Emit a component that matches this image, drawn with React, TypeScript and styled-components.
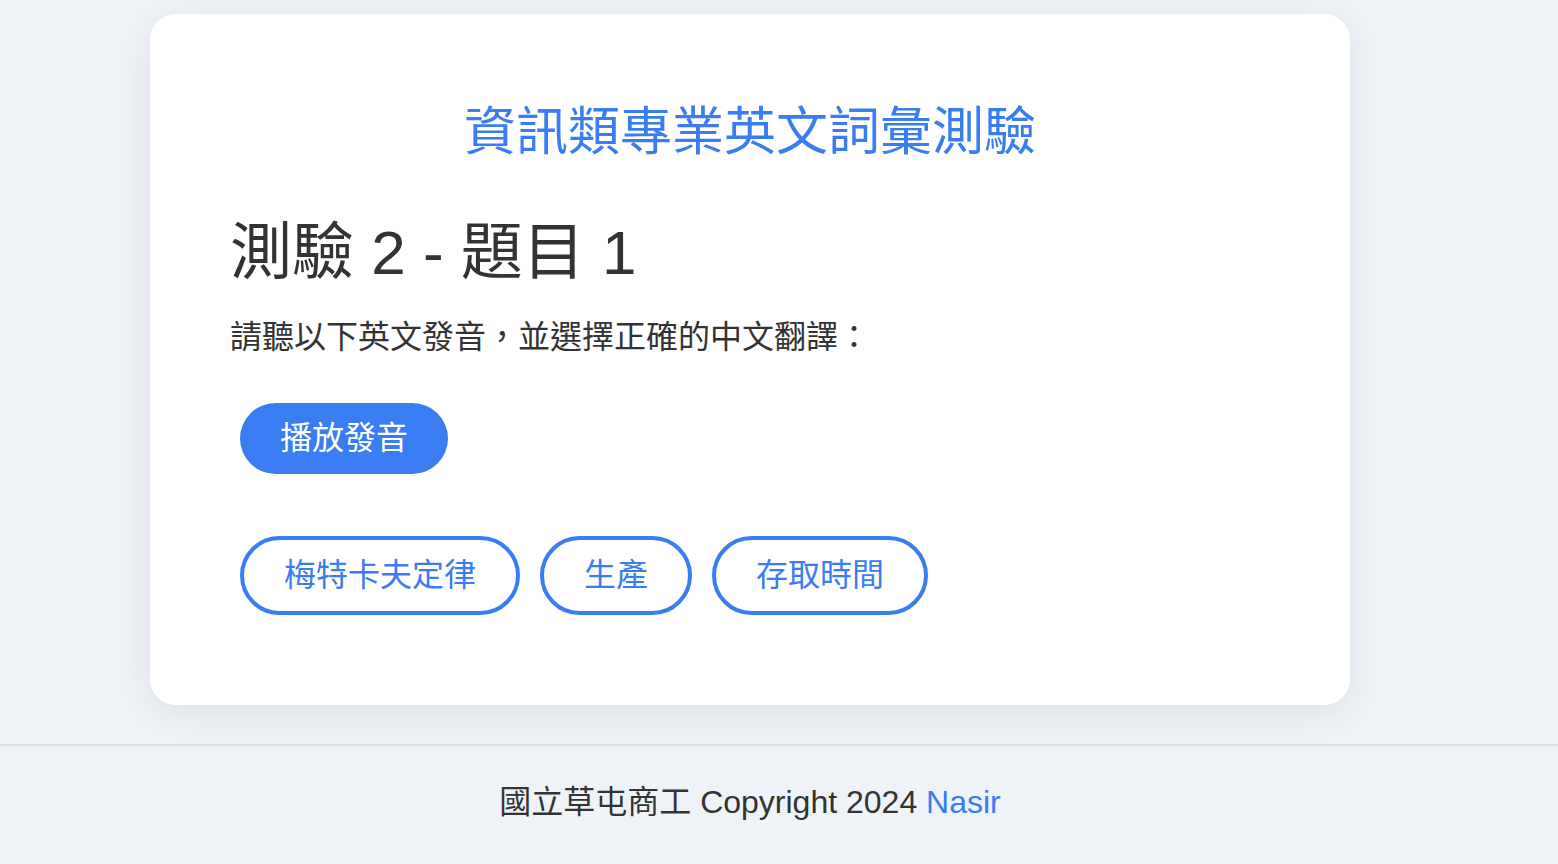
import React from "react";
import styled, { createGlobalStyle } from "styled-components";

const GlobalStyle = createGlobalStyle`
  html, body {
    margin: 0;
    padding: 0;
    background: #eff3f8;
    font-family: "Liberation Sans", "Noto Sans CJK TC", sans-serif;
    color: #333;
  }
`;

const BLUE = "#3a7cf2";

const Page = styled.div`
  width: 1500px;
  padding-top: 14px;
`;

const Card = styled.div`
  width: 1200px;
  margin: 0 auto;
  box-sizing: border-box;
  background: #fff;
  border-radius: 26px;
  box-shadow: 0 8px 36px rgba(30, 40, 60, 0.09);
  padding: 82px 80px 90px 80px;
`;

const Title = styled.h1`
  margin: 0;
  text-align: center;
  color: ${BLUE};
  font-size: 52px;
  font-weight: 400;
  line-height: 72px;
`;

const Question = styled.h2`
  margin: 49px 0 0 0;
  font-size: 62px;
  font-weight: 400;
  line-height: 72px;
`;

const Prompt = styled.p`
  margin: 24px 0 0 0;
  font-size: 32px;
  line-height: 48px;
`;

const Row = styled.div<{ $top: number }>`
  display: flex;
  gap: 20px;
  margin-top: ${(p) => p.$top}px;
  padding-left: 10px;
`;

const PillButton = styled.button<{ $filled?: boolean }>`
  font-family: inherit;
  font-size: 32px;
  line-height: 39px;
  padding: 16px 40px;
  border-radius: 999px;
  cursor: pointer;
  border: ${(p) => (p.$filled ? "none" : `4px solid ${BLUE}`)};
  background: ${(p) => (p.$filled ? BLUE : "#fff")};
  color: ${(p) => (p.$filled ? "#fff" : BLUE)};
`;

const Footer = styled.footer`
  margin-top: 39px;
  border-top: 2px solid #dcdde0;
  height: 116px;
`;

const FooterText = styled.div`
  width: 1500px;
  text-align: center;
  font-size: 32px;
  line-height: 112px;
  color: #333;

  a {
    color: ${BLUE};
    text-decoration: none;
  }
`;

const options = ["梅特卡夫定律", "生產", "存取時間"];

export default function App() {
  return (
    <>
      <GlobalStyle />
      <Page>
        <Card>
          <Title>資訊類專業英文詞彙測驗</Title>
          <Question>測驗 2 - 題目 1</Question>
          <Prompt>請聽以下英文發音，並選擇正確的中文翻譯：</Prompt>
          <Row $top={42}>
            <PillButton $filled>播放發音</PillButton>
          </Row>
          <Row $top={62}>
            {options.map((o) => (
              <PillButton key={o}>{o}</PillButton>
            ))}
          </Row>
        </Card>
      </Page>
      <Footer>
        <FooterText>
          國立草屯商工 Copyright 2024 <a href="#">Nasir</a>
        </FooterText>
      </Footer>
    </>
  );
}
